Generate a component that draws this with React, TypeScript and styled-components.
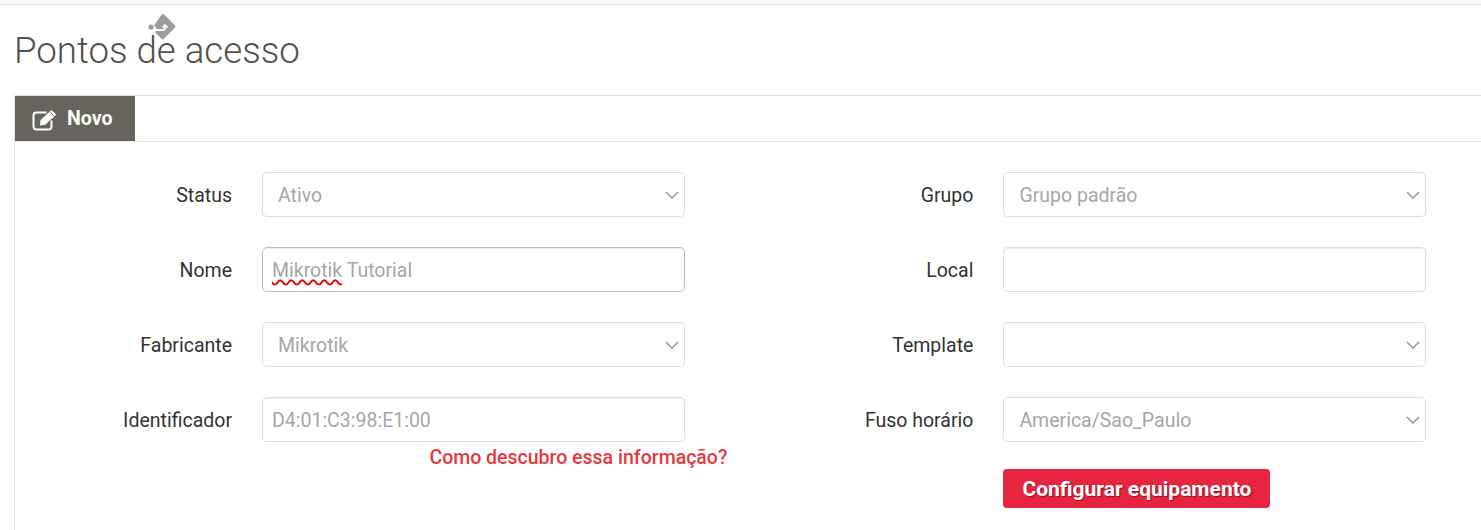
import React from "react";
import styled, { createGlobalStyle } from "styled-components";

const GlobalStyle = createGlobalStyle`
  html, body {
    margin: 0;
    padding: 0;
    background: #fff;
    overflow: hidden;
  }
  body {
    font-family: Roboto, "Liberation Sans", sans-serif;
  }
`;

const Chevron: React.FC = () => (
  <ChevronSvg viewBox="0 0 14 8" width="14" height="8">
    <path d="M1 1l6 6 6-6" fill="none" stroke="#9a9a9a" strokeWidth="1.6" />
  </ChevronSvg>
);

const EditIcon: React.FC = () => (
  <svg viewBox="0 0 26 24" width="26" height="24">
    <path
      d="M14.5 5.5H4.5a3 3 0 0 0-3 3v11a3 3 0 0 0 3 3h12a3 3 0 0 0 3-3v-6"
      fill="none"
      stroke="#fff"
      strokeWidth="2"
    />
    <path d="M8.5 13L19.5 3l4.8 4.4L13.3 17.8 8 18.5z" fill="#fff" />
    <path d="M18.4 5.4l3.4 3.4" stroke="#67645e" strokeWidth="1" />
  </svg>
);

const Field: React.FC<{
  label: string;
  value?: string;
  select?: boolean;
  focused?: boolean;
  misspelt?: string;
  rest?: string;
}> = ({ label, value, select, focused, misspelt, rest }) => (
  <Row>
    <Label>{label}</Label>
    <Control $select={select} $focused={focused}>
      {misspelt && <Misspelt>{misspelt}</Misspelt>}
      {rest}
      {value}
      {select && <Chevron />}
    </Control>
  </Row>
);

export default function App() {
  return (
    <Page>
      <GlobalStyle />
      <TopStrip />
      <Title>
        Pontos de acesso
        <DragIcon viewBox="147 12 30 30" width="30" height="30">
          <path
            d="M161.7 14.6c.7-.7 1.7-.7 2.4 0l10.7 10.7c.7.7.7 1.7 0 2.4l-10.9 11c-.7.7-1.7.7-2.4 0l-6.6-6.6c.9-.6 1.5-1.7 1.5-2.9 0-1.7-1-3-2.4-3.4l-.1-.1z"
            fill="#9c9c9c"
          />
          <circle cx="151" cy="27" r="2.6" fill="#9c9c9c" />
          <path
            d="M155.5 30h7.5c1.4 0 2-.8 2-2v-2M162.5 27.6l2.5-2.6 2.5 2.6"
            fill="none"
            stroke="#fff"
            strokeWidth="1.8"
          />
        </DragIcon>
      </Title>
      <Panel>
        <TabBar>
          <Tab>
            <EditIcon />
            Novo
          </Tab>
        </TabBar>
        <Form>
          <Column>
            <Field label="Status" value="Ativo" select />
            <Field label="Nome" misspelt="Mikrotik" rest=" Tutorial" focused />
            <Field label="Fabricante" value="Mikrotik" select />
            <Field label="Identificador" value="D4:01:C3:98:E1:00" />
            <HelpLink>Como descubro essa informação?</HelpLink>
          </Column>
          <Column>
            <Field label="Grupo" value="Grupo padrão" select />
            <Field label="Local" />
            <Field label="Template" select />
            <Field label="Fuso horário" value="America/Sao_Paulo" select />
            <ButtonRow>
              <SubmitButton>Configurar equipamento</SubmitButton>
            </ButtonRow>
          </Column>
        </Form>
      </Panel>
    </Page>
  );
}

const Page = styled.div`
  width: 1481px;
  height: 530px;
  overflow: hidden;
  display: flex;
  flex-direction: column;
`;

const TopStrip = styled.div`
  height: 4px;
  background: #f8f8f8;
  border-bottom: 1px solid #e2e2e2;
`;

const Title = styled.h1`
  position: relative;
  margin: 0;
  padding: 25px 0 0 14px;
  height: 90px;
  box-sizing: border-box;
  font-size: 36.65px;
  line-height: 42px;
  font-weight: 300;
  color: #54504c;
`;

const DragIcon = styled.svg`
  position: absolute;
  left: 147px;
  top: 7px;
`;

const Panel = styled.section`
  flex: 1;
  margin-left: 14px;
  border-left: 1px solid #e6e6e6;
`;

const TabBar = styled.div`
  display: flex;
  height: 45px;
  border-top: 1px solid #e4e4e4;
  border-bottom: 1px solid #e4e4e4;
`;

const Tab = styled.div`
  display: flex;
  align-items: center;
  gap: 9px;
  width: 120px;
  box-sizing: border-box;
  padding-left: 17px;
  background: #67645e;
  color: #fff;
  font-size: 19.6px;
  font-weight: 700;
`;

const Form = styled.form`
  display: flex;
  padding-top: 30px;
`;

const Column = styled.div`
  flex: none;
  width: 741.4px;
  display: flex;
  flex-direction: column;
`;

const Row = styled.div`
  display: flex;
  align-items: center;
  margin-bottom: 30px;
`;

const Label = styled.label`
  width: 247px;
  padding: 2px 30px 0 0;
  box-sizing: border-box;
  text-align: right;
  font-size: 19.5px;
  color: #333;
`;

const Control = styled.div<{ $select?: boolean; $focused?: boolean }>`
  position: relative;
  width: 423px;
  height: 45px;
  box-sizing: border-box;
  display: flex;
  align-items: center;
  white-space: pre;
  padding: 1px 0 0 ${(p) => (p.$select ? "15px" : "9px")};
  border: 1px solid ${(p) => (p.$focused ? "#bdbdbd" : "#dedede")};
  border-radius: 5px;
  background: #fff;
  box-shadow: ${(p) => (p.$select ? "none" : "inset 0 1px 1px rgba(0, 0, 0, 0.075)")};
  font-size: 19.5px;
  color: #a6a6a6;
`;

const ChevronSvg = styled.svg`
  position: absolute;
  right: 5px;
  top: 18px;
`;

const Misspelt = styled.span`
  text-decoration: underline wavy #e00000 1.5px;
  text-underline-offset: 2px;
`;

const HelpLink = styled.a`
  align-self: flex-end;
  margin: -26px 29px 0 0;
  font-size: 19.5px;
  line-height: 24px;
  font-weight: 500;
  color: #e5393f;
  white-space: nowrap;
`;

const ButtonRow = styled.div`
  padding-left: 247px;
  margin-top: -3px;
`;

const SubmitButton = styled.button`
  width: 267px;
  height: 39px;
  border: 0;
  border-radius: 4px;
  background: #e72540;
  color: #fff;
  font-family: Roboto, sans-serif;
  font-size: 21px;
  font-weight: 700;
  text-shadow: 1px 1px 1px rgba(0, 0, 0, 0.45);
  padding: 0;
`;
